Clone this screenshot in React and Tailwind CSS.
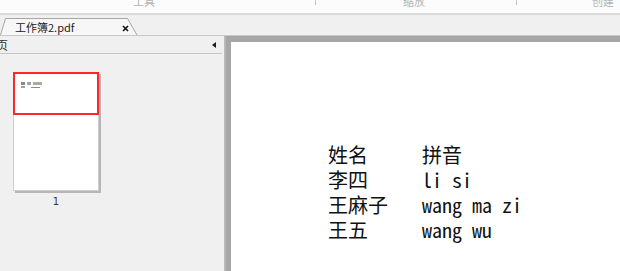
import React from "react";

const cjk = "font-['Noto_Sans_CJK_SC','Noto_Sans',sans-serif]";
const mono = "font-['Noto_Sans_Mono_CJK_SC','Noto_Sans_CJK_SC','DejaVu_Sans_Mono',monospace]";

const rows = [
  ["姓名", "拼音"],
  ["李四", "li si"],
  ["王麻子", "wang ma zi"],
  ["王五", "wang wu"],
];

export default function App() {
  return (
    <div className={`w-[620px] h-[271px] overflow-hidden bg-[#f0f0f0] flex flex-col ${cjk}`}>
      {/* top ribbon group labels (clipped) */}
      <div className="h-[15px] shrink-0 bg-[#fcfcfc] border-b-2 border-[#d9d9d9] flex overflow-hidden text-[11px] leading-[11px] text-[#b4b4b4]">
        <div className="w-[315px] shrink-0 pl-[133px]">
          <div className="-mt-[4px]">工具</div>
        </div>
        <div className="w-px h-[5px] bg-[#c4c4c4] shrink-0" />
        <div className="w-[200px] shrink-0 pl-[87px]">
          <div className="-mt-[4px]">缩放</div>
        </div>
        <div className="w-px h-[5px] bg-[#c4c4c4] shrink-0" />
        <div className="flex-1 pl-[75px]">
          <div className="-mt-[4px]">创建</div>
        </div>
      </div>

      {/* tab strip */}
      <div className="h-[21px] shrink-0 border-b border-[#c9c9c9] flex items-end">
        <div className="relative w-[138px] h-[17px]">
          <svg className="absolute inset-0" width="138" height="17" viewBox="0 0 138 17">
            <path d="M0.5 17 L5.5 0.5 H127.5 L137 17" fill="#f7f7f7" stroke="#a6a6a6" strokeWidth="1" />
          </svg>
          <div className="relative flex items-center h-full pl-[15px] pr-[9px]">
            <span className="text-[11px] leading-none text-[#222] pt-[2px]">工作簿2.pdf</span>
            <svg className="ml-auto mt-[3px]" width="7" height="7" viewBox="0 0 7 7">
              <path d="M1 1 L6 6 M6 1 L1 6" stroke="#111" strokeWidth="1.6" />
            </svg>
          </div>
        </div>
      </div>

      {/* main area */}
      <div className="flex-1 flex min-h-0">
        {/* left pages panel */}
        <div className="w-[224px] shrink-0 flex flex-col">
          <div className="h-[18px] mr-[2px] border-b border-[#c8c8c8] flex items-center">
            <span className="text-[12px] leading-none text-[#333] -ml-[4px]">页</span>
            <svg className="ml-auto mr-[6px]" width="4" height="6" viewBox="0 0 4 6">
              <path d="M4 0 L0 3 L4 6 Z" fill="#1a1a1a" />
            </svg>
          </div>
          <div className="pl-[13px] pt-[18px] flex flex-col items-start">
            <div className="relative w-[86px] h-[119px] bg-white border border-[#cfcfcf] shadow-[2px_2px_0_#b5b5b5]">
              <div className="absolute -left-px -top-px w-[86px] h-[43px] border-2 border-[#ff2626]" />
              <div className="absolute left-[7px] top-[9px] flex flex-col gap-[1px]">
                <div className="flex gap-[2px]">
                  <div className="w-[4px] h-[3px] bg-[#8a8a8a]" />
                  <div className="w-[4px] h-[3px] bg-[#9aa7b0]" />
                  <div className="w-[9px] h-[3px] bg-[#b0a89a]" />
                </div>
                <div className="flex gap-[2px]">
                  <div className="w-[4px] h-[2px] bg-[#a0a0a0]" />
                  <div className="w-[2px]" />
                  <div className="w-[9px] h-[1px] mt-px bg-[#8a8a8a]" />
                </div>
              </div>
            </div>
            <div className="w-[86px] text-center text-[10px] leading-none text-[#333] mt-[6px] font-['DejaVu_Sans',sans-serif]">1</div>
          </div>
        </div>

        {/* document view */}
        <div className="flex-1 bg-[#a6a6a6] border-l-2 border-[#b8b8b8] pl-[5px] pt-[6px] flex">
          <div className="flex-1 bg-white pt-[100px] pl-[97px]">
            <div className={`grid grid-cols-[94px_auto] text-[20px] leading-[25px] text-[#111] ${mono}`}>
              {rows.map(([a, b]) => (
                <React.Fragment key={a}>
                  <div>{a}</div>
                  <div>{b}</div>
                </React.Fragment>
              ))}
            </div>
          </div>
        </div>
      </div>
    </div>
  );
}
